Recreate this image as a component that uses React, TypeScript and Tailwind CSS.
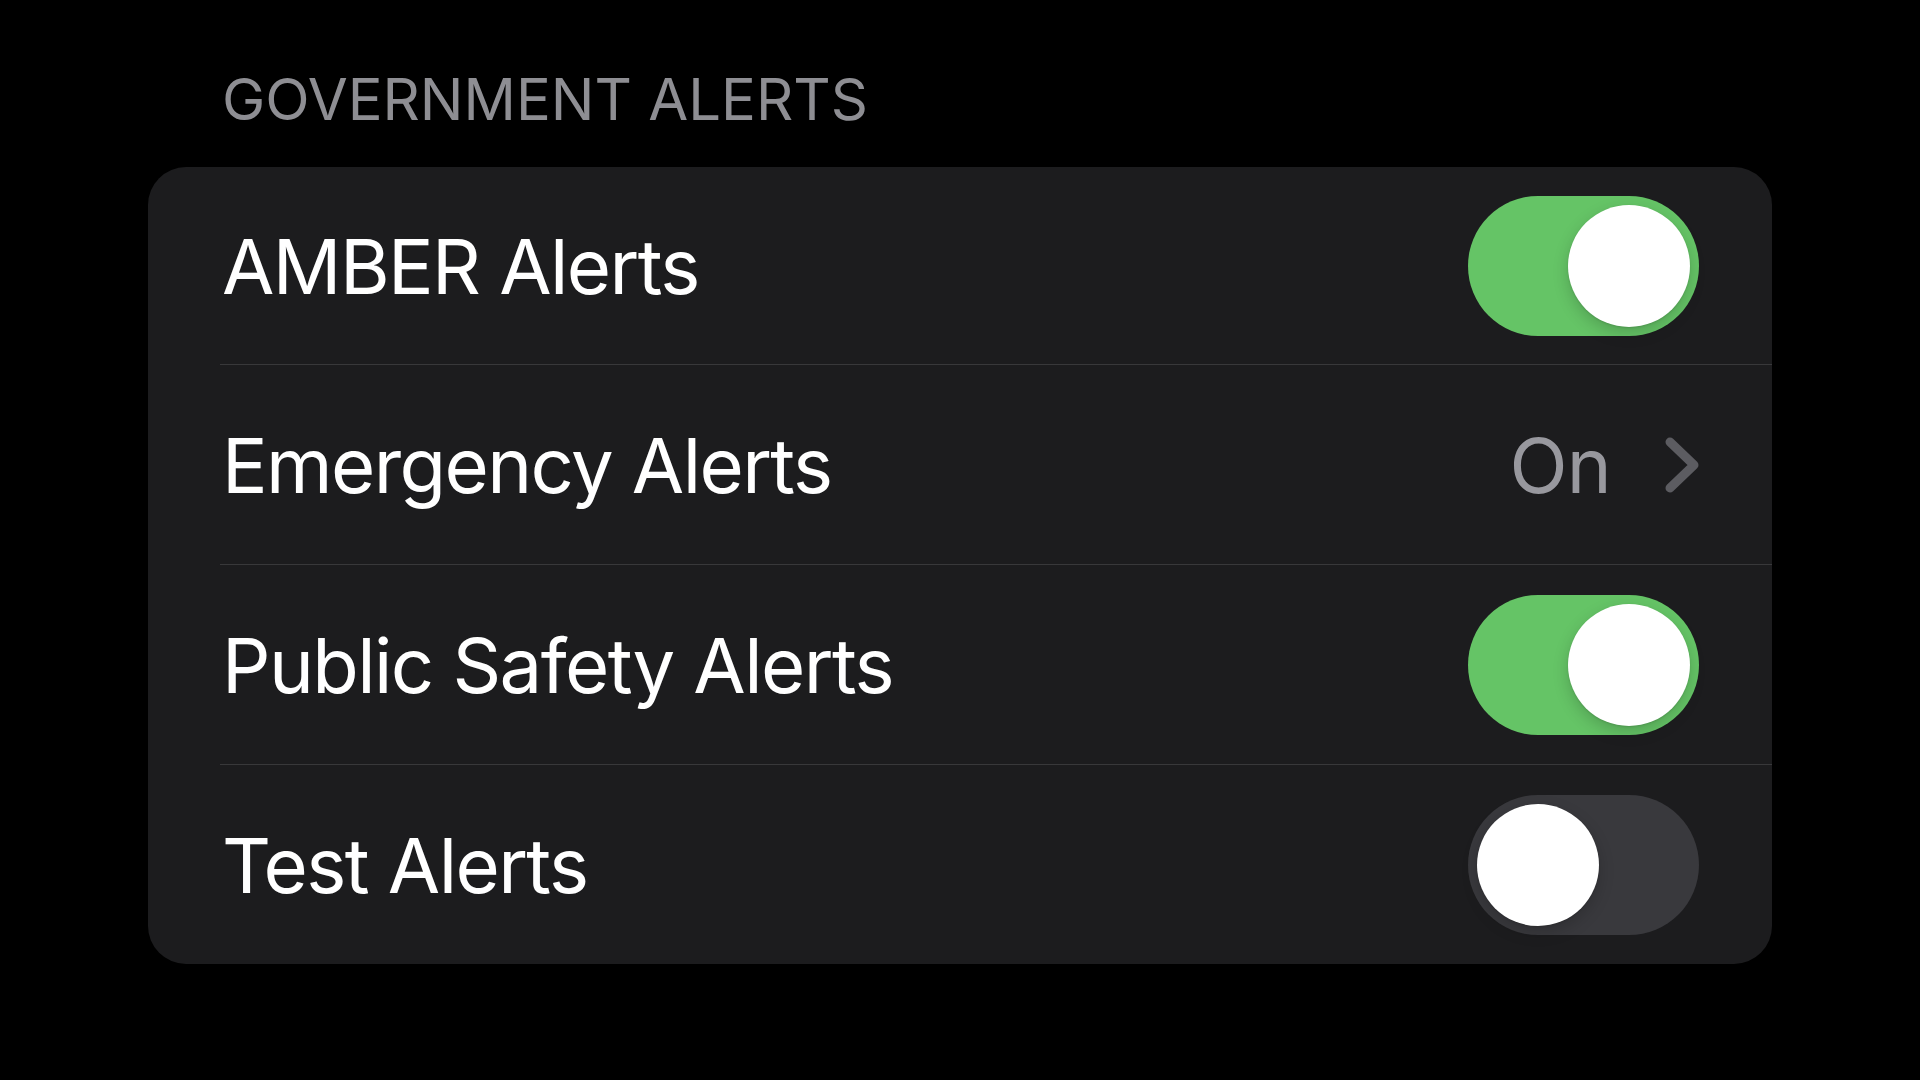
import { useState } from "react"

type Row =
    | { id: string; label: string; kind: "toggle"; on: boolean }
    | { id: string; label: string; kind: "link"; value: string }

const rows: Row[] = [
    { id: "amber", label: "AMBER Alerts", kind: "toggle", on: true },
    { id: "emergency", label: "Emergency Alerts", kind: "link", value: "On" },
    { id: "public", label: "Public Safety Alerts", kind: "toggle", on: true },
    { id: "test", label: "Test Alerts", kind: "toggle", on: false },
]

const font = { fontFamily: "Inter, 'Noto Sans', 'Liberation Sans', sans-serif" }

const Toggle = ({ on, onChange }: { on: boolean; onChange: () => void }) => (
    <button
        type="button"
        role="switch"
        aria-checked={on}
        onClick={onChange}
        className={`relative flex h-[140px] w-[231px] shrink-0 items-center rounded-full px-[9px] transition-colors ${
            on ? "justify-end bg-[#65c466]" : "justify-start bg-[#39393d]"
        }`}
    >
        <span className="block h-[122px] w-[122px] rounded-full bg-white shadow-[0_6px_16px_rgba(0,0,0,0.18),0_1px_2px_rgba(0,0,0,0.12)]" />
    </button>
)

const Chevron = () => (
    <svg width="34" height="56" viewBox="0 0 34 56" fill="none" className="shrink-0">
        <path d="M5 5 L29 28 L5 51" stroke="#5c5c61" strokeWidth="9" strokeLinecap="round" strokeLinejoin="round" />
    </svg>
)

export default function App() {
    const [state, setState] = useState<Record<string, boolean>>(() =>
        Object.fromEntries(rows.filter((r) => r.kind === "toggle").map((r) => [r.id, (r as { on: boolean }).on]))
    )

    return (
        <div className="min-h-screen bg-black px-[148px] pt-[64px]" style={font}>
            {/* section header */}
            <div className="h-[103px] px-[74px] text-[58px] leading-[70px] text-[#8e8e93]">
                GOVERNMENT ALERTS
            </div>

            {/* grouped list */}
            <div className="overflow-hidden rounded-[38px] bg-[#1c1c1e]">
                {rows.map((row, i) => (
                    <div key={row.id}>
                        {i > 0 && <div className="ml-[72px] h-px bg-[#38383a]" />}
                        <div
                            className={`flex items-center justify-between pl-[74px] pr-[73px] ${
                                i === 0 ? "h-[197px]" : "h-[199px]"
                            }`}
                        >
                            <span className="text-[76px] leading-none tracking-[-0.021em] text-white">{row.label}</span>
                            {row.kind === "toggle" ? (
                                <Toggle
                                    on={state[row.id]}
                                    onChange={() => setState((s) => ({ ...s, [row.id]: !s[row.id] }))}
                                />
                            ) : (
                                <div className="flex items-center gap-[54px]">
                                    <span className="text-[76px] leading-none tracking-[-0.01em] text-[#98989e]">{row.value}</span>
                                    <Chevron />
                                </div>
                            )}
                        </div>
                    </div>
                ))}
            </div>
        </div>
    )
}
